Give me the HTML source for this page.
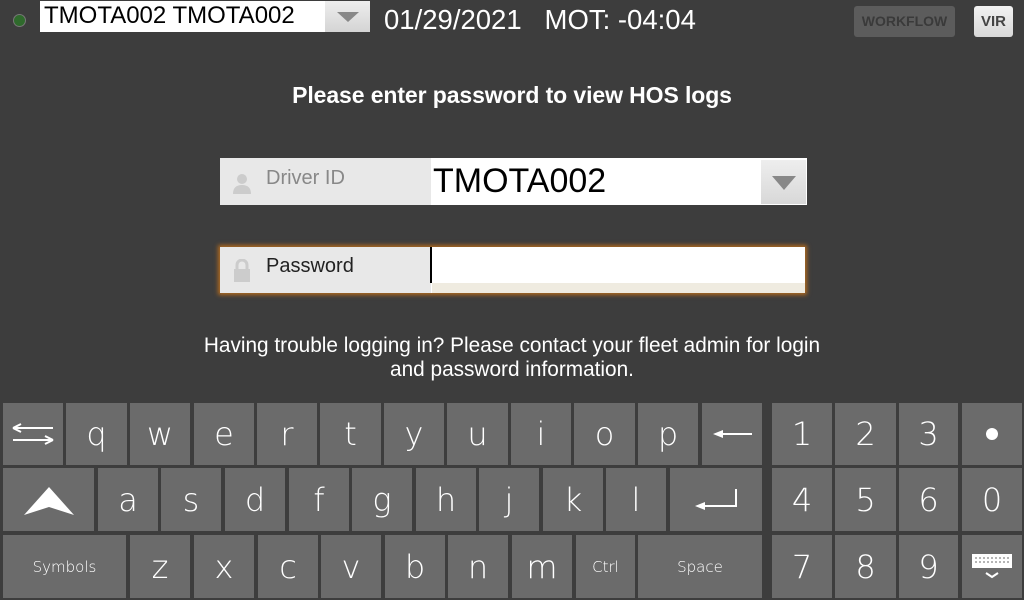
<!DOCTYPE html>
<html><head><style>
body{margin:0;width:1024px;height:600px;background:#3d3d3d;position:relative;overflow:hidden;font-family:"Liberation Sans",sans-serif}
.a{position:absolute}
.k{position:absolute;background:#6b6b6b;color:#fff;display:flex;align-items:center;justify-content:center;font-size:32px;font-family:"DejaVu Sans","Liberation Sans",sans-serif;font-weight:300}
.s{font-size:15px}
</style></head><body>
<div class="a" style="left:13px;top:14px;width:11px;height:11px;border-radius:50%;background:#2f6a2c;border:1px solid #777"></div>
<div class="a" style="left:40px;top:1px;width:330px;height:31px;background:#fff"></div>
<div class="a" style="left:44px;top:2px;font-size:24px;color:#000">TMOTA002 TMOTA002</div>
<div class="a" style="left:325px;top:1px;width:45px;height:31px;background:linear-gradient(#eee,#d4d4d4)"></div>
<div class="a" style="left:337px;top:12px;width:0;height:0;border-left:11px solid transparent;border-right:11px solid transparent;border-top:10px solid #888"></div>
<div class="a" style="left:384px;top:4px;font-size:27.5px;color:#fff">01/29/2021&nbsp;&nbsp;&nbsp;MOT: -04:04</div>
<div class="a" style="left:854px;top:6px;width:101px;height:31px;background:#5c5c5c;border-radius:3px;color:#3a3a3a;font-weight:bold;font-size:14px;text-align:center;line-height:31px">WORKFLOW</div>
<div class="a" style="left:974px;top:6px;width:39px;height:31px;background:linear-gradient(#f2f2f2,#d8d8d8);border-radius:3px;color:#444;font-weight:bold;font-size:15px;text-align:center;line-height:31px">VIR</div>
<div class="a" style="left:0;width:1024px;top:82px;text-align:center;color:#fff;font-weight:bold;font-size:23px;letter-spacing:-0.1px">Please enter password to view HOS logs</div>

<div class="a" style="left:220px;top:158px;width:211px;height:47px;background:#e8e8e8"></div>
<div class="a" style="left:232px;top:172px;width:20px;height:22px"><svg width="20" height="22"><circle cx="10" cy="7" r="5" fill="#ccc"/><path d="M1 22 Q1 13 10 13 Q19 13 19 22Z" fill="#ccc"/></svg></div>
<div class="a" style="left:266px;top:167px;font-size:20px;color:#888">Driver ID</div>
<div class="a" style="left:431px;top:158px;width:376px;height:47px;background:#fff"></div>
<div class="a" style="left:433px;top:162px;font-size:34px;color:#000">TMOTA002</div>
<div class="a" style="left:761px;top:160px;width:45px;height:44px;background:linear-gradient(#eee,#d8d8d8)"></div>
<div class="a" style="left:772px;top:176px;border-left:12px solid transparent;border-right:12px solid transparent;border-top:14px solid #888"></div>

<div class="a" style="left:220px;top:247px;width:585px;height:46px;box-shadow:0 0 4px 2px #b06a20;background:#fff"></div>
<div class="a" style="left:220px;top:247px;width:211px;height:46px;background:#e8e8e8"></div>
<div class="a" style="left:232px;top:259px;width:20px;height:24px"><svg width="20" height="24"><path d="M5 10 V6 a5 5 0 0 1 10 0 V10" stroke="#ccc" stroke-width="3" fill="none"/><rect x="2" y="10" width="16" height="13" fill="#ccc"/></svg></div>
<div class="a" style="left:266px;top:255px;font-size:20px;color:#222">Password</div>
<div class="a" style="left:430px;top:247px;width:2px;height:36px;background:#000"></div>
<div class="a" style="left:432px;top:283px;width:373px;height:10px;background:#efebe0"></div>

<div class="a" style="left:0;width:1024px;top:334px;text-align:center;color:#fff;font-size:20.8px;line-height:24px">Having trouble logging in? Please contact your fleet admin for login<br>and password information.</div>

<div class="k" style="left:3px;top:403px;width:60px;height:62px"><svg width="44" height="24"><path d="M2 6H42M2 6l8-4M2 6l8 4M2 18H42M42 18l-8-4M42 18l-8 4" stroke="#fff" stroke-width="2" fill="none"/></svg></div>
<div class="k" style="left:66px;top:403px;width:61px;height:62px">q</div>
<div class="k" style="left:130px;top:403px;width:60px;height:62px">w</div>
<div class="k" style="left:194px;top:403px;width:60px;height:62px">e</div>
<div class="k" style="left:257px;top:403px;width:60px;height:62px">r</div>
<div class="k" style="left:320px;top:403px;width:61px;height:62px">t</div>
<div class="k" style="left:384px;top:403px;width:60px;height:62px">y</div>
<div class="k" style="left:447px;top:403px;width:61px;height:62px">u</div>
<div class="k" style="left:511px;top:403px;width:60px;height:62px">i</div>
<div class="k" style="left:574px;top:403px;width:61px;height:62px">o</div>
<div class="k" style="left:638px;top:403px;width:60px;height:62px">p</div>
<div class="k" style="left:702px;top:403px;width:60px;height:62px"><svg width="40" height="12"><path d="M8 6H40" stroke="#fff" stroke-width="2"/><path d="M1 6l10-4v8z" fill="#fff"/></svg></div>

<div class="k" style="left:3px;top:468px;width:91px;height:63px"><svg width="50" height="30"><path d="M0 30L25 2L50 30L25 22Z" fill="#fff"/></svg></div>
<div class="k" style="left:98px;top:468px;width:60px;height:63px">a</div>
<div class="k" style="left:161px;top:468px;width:60px;height:63px">s</div>
<div class="k" style="left:225px;top:468px;width:60px;height:63px">d</div>
<div class="k" style="left:289px;top:468px;width:60px;height:63px">f</div>
<div class="k" style="left:352px;top:468px;width:60px;height:63px">g</div>
<div class="k" style="left:416px;top:468px;width:60px;height:63px">h</div>
<div class="k" style="left:479px;top:468px;width:60px;height:63px">j</div>
<div class="k" style="left:543px;top:468px;width:60px;height:63px">k</div>
<div class="k" style="left:606px;top:468px;width:60px;height:63px">l</div>
<div class="k" style="left:670px;top:468px;width:92px;height:63px"><svg width="44" height="22"><path d="M42 0V17H8" stroke="#fff" stroke-width="2" fill="none"/><path d="M1 17l10-4v8z" fill="#fff"/></svg></div>

<div class="k s" style="left:3px;top:535px;width:123px;height:63px">Symbols</div>
<div class="k" style="left:130px;top:535px;width:60px;height:63px">z</div>
<div class="k" style="left:194px;top:535px;width:60px;height:63px">x</div>
<div class="k" style="left:258px;top:535px;width:60px;height:63px">c</div>
<div class="k" style="left:321px;top:535px;width:60px;height:63px">v</div>
<div class="k" style="left:385px;top:535px;width:60px;height:63px">b</div>
<div class="k" style="left:448px;top:535px;width:60px;height:63px">n</div>
<div class="k" style="left:512px;top:535px;width:60px;height:63px">m</div>
<div class="k s" style="left:576px;top:535px;width:59px;height:63px">Ctrl</div>
<div class="k s" style="left:638px;top:535px;width:124px;height:63px">Space</div>

<div class="k" style="left:772px;top:403px;width:60px;height:62px">1</div>
<div class="k" style="left:835px;top:403px;width:61px;height:62px">2</div>
<div class="k" style="left:899px;top:403px;width:59px;height:62px">3</div>
<div class="k" style="left:962px;top:403px;width:60px;height:62px"><div style="width:12px;height:12px;border-radius:50%;background:#fff"></div></div>
<div class="k" style="left:772px;top:468px;width:60px;height:63px">4</div>
<div class="k" style="left:835px;top:468px;width:61px;height:63px">5</div>
<div class="k" style="left:899px;top:468px;width:59px;height:63px">6</div>
<div class="k" style="left:962px;top:468px;width:60px;height:63px">0</div>
<div class="k" style="left:772px;top:535px;width:60px;height:63px">7</div>
<div class="k" style="left:835px;top:535px;width:61px;height:63px">8</div>
<div class="k" style="left:899px;top:535px;width:59px;height:63px">9</div>
<div class="k" style="left:962px;top:535px;width:60px;height:63px"><svg width="42" height="30"><rect x="1" y="2" width="40" height="14" fill="#fff"/><path d="M4 6h34M4 10h34" stroke="#6b6b6b" stroke-width="1" stroke-dasharray="2 2"/><path d="M15 21l6 4 6-4" stroke="#fff" stroke-width="2" fill="none"/></svg></div>
</body></html>
